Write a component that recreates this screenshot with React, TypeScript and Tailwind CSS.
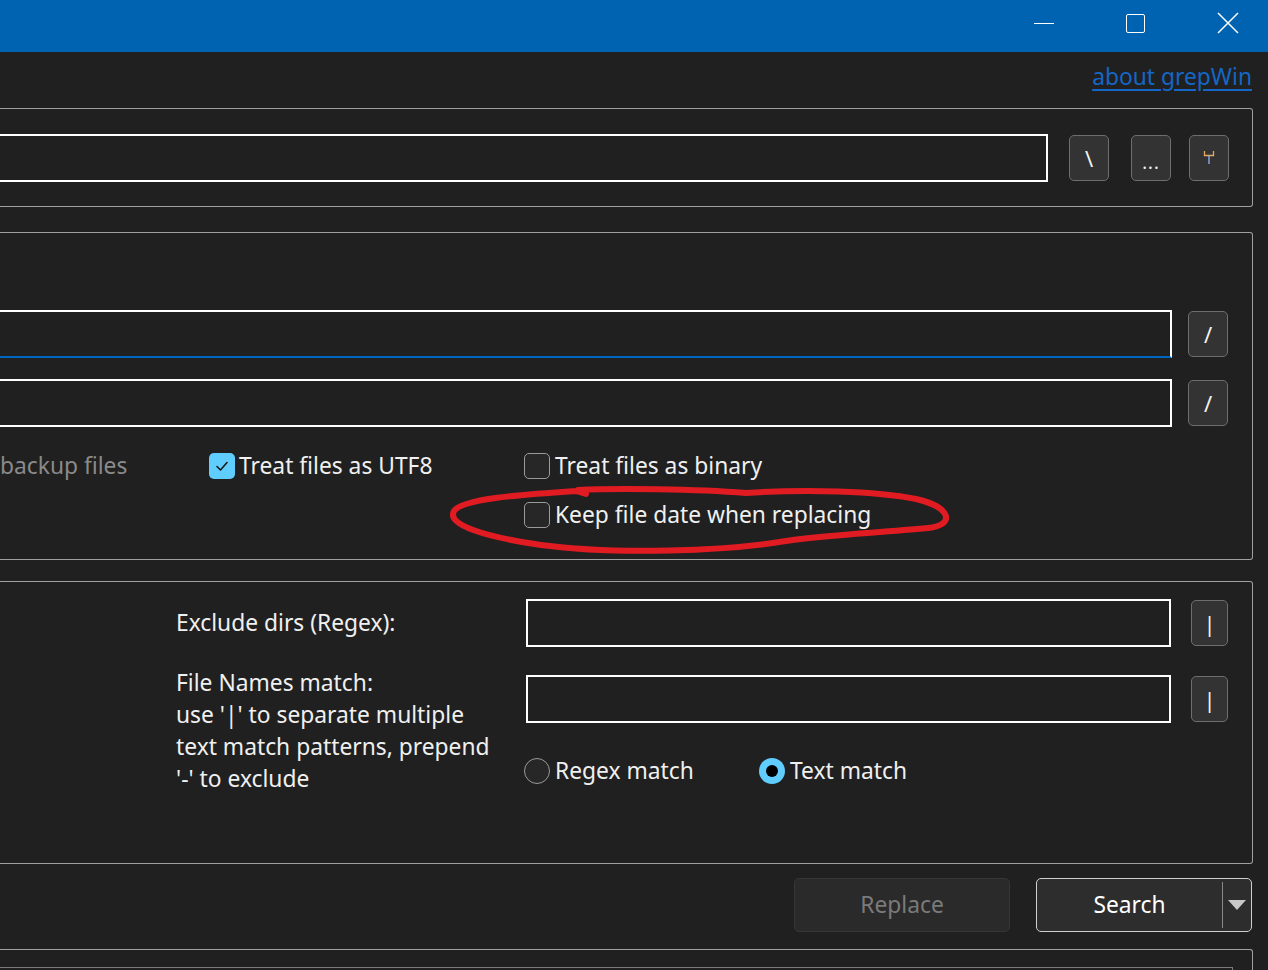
import React from "react";

const ToolButton = ({ children, className = "" }: { children: React.ReactNode; className?: string }) => (
  <div
    className={`flex items-center justify-center h-[46px] rounded-[5px] border border-[#6e6e6e] bg-[#333333] text-[#f2f2f2] text-[22px] leading-none shrink-0 ${className}`}
  >
    {children}
  </div>
);

const CheckBox = ({ checked = false }: { checked?: boolean }) =>
  checked ? (
    <div className="w-[26px] h-[26px] rounded-[5px] bg-[#60cdff] flex items-center justify-center shrink-0">
      <svg width="14" height="12" viewBox="0 0 14 12" fill="none">
        <path d="M2 6.5 L5.5 10 L12 2.5" stroke="#1a1a1a" strokeWidth="1.6" strokeLinecap="round" strokeLinejoin="round" />
      </svg>
    </div>
  ) : (
    <div className="w-[26px] h-[26px] rounded-[5px] border-[1.5px] border-[#9a9a9a] bg-[#272727] shrink-0" />
  );

const Radio = ({ checked = false }: { checked?: boolean }) =>
  checked ? (
    <div className="w-[26px] h-[26px] rounded-full bg-[#60cdff] flex items-center justify-center shrink-0">
      <div className="w-[12px] h-[12px] rounded-full bg-black" />
    </div>
  ) : (
    <div className="w-[26px] h-[26px] rounded-full border-[1.5px] border-[#9a9a9a] bg-[#272727] shrink-0" />
  );

export default function App() {
  return (
    <div className="relative w-[1268px] h-[970px] overflow-hidden bg-[#202020] text-[#f0f0f0] font-['Noto_Sans',sans-serif] text-[22.8px]">
      {/* Title bar */}
      <div className="h-[52px] bg-[#0063b1] flex items-center justify-end pb-[6px]">
        <div className="w-[76px] flex items-center justify-center">
          <div className="w-[20px] h-px bg-white" />
        </div>
        <div className="w-[106px] flex items-center justify-center">
          <div className="w-[19px] h-[19px] border-[1.5px] border-white rounded-[2px]" />
        </div>
        <div className="w-[80px] flex items-center justify-center">
          <svg width="22" height="22" viewBox="0 0 22 22">
            <path d="M1 1 L21 21 M21 1 L1 21" stroke="white" strokeWidth="1.5" />
          </svg>
        </div>
      </div>

      {/* About link */}
      <div className="h-[56px] flex items-center justify-end pr-[16px] pb-[6px]">
        <span className="text-[#1467c7] underline underline-offset-[4px]">about grepWin</span>
      </div>

      {/* Search path group */}
      <div className="h-[99px] mr-[15px] border-y border-r border-[#a0a0a0] rounded-tr-[3px] rounded-br-[3px] flex items-center pr-[23px]">
        <div className="flex-1 h-[48px] border-2 border-l-0 border-white" />
        <ToolButton className="w-[40px] ml-[21px]">\</ToolButton>
        <ToolButton className="w-[40px] ml-[22px]">
          <span className="text-[18px] tracking-[1px] mt-[8px]">...</span>
        </ToolButton>
        <ToolButton className="w-[40px] ml-[18px]">
          <svg width="12" height="14" viewBox="0 0 12 14" fill="none">
            <path d="M1.5 0 V4.5 H10.5 V0" stroke="#e8a860" strokeWidth="1.3" />
            <path d="M6 4.5 V13" stroke="#8cb8f0" strokeWidth="1.3" />
          </svg>
        </ToolButton>
      </div>

      {/* Search text group */}
      <div className="relative h-[328px] mt-[25px] mr-[15px] border-y border-r border-[#a0a0a0] rounded-tr-[3px] rounded-br-[3px] pt-[77px] pr-[24px]">
        <div className="flex items-center">
          <div className="flex-1 h-[48px] border-2 border-l-0 border-white border-b-[#0067c0]" />
          <ToolButton className="w-[40px] ml-[16px]">/</ToolButton>
        </div>
        <div className="flex items-center mt-[21px]">
          <div className="flex-1 h-[48px] border-2 border-l-0 border-white" />
          <ToolButton className="w-[40px] ml-[16px]">/</ToolButton>
        </div>
        <div className="flex items-center h-[32px] mt-[23px]">
          <div className="w-[209px] text-[#8a8a8a]">backup files</div>
          <div className="w-[315px] flex items-center gap-[4px]">
            <CheckBox checked />
            <span>Treat files as UTF8</span>
          </div>
          <div className="flex items-center gap-[5px]">
            <CheckBox />
            <span>Treat files as binary</span>
          </div>
        </div>
        <div className="flex items-center h-[32px] mt-[17px] pl-[524px] gap-[5px]">
          <CheckBox />
          <span>Keep file date when replacing</span>
        </div>

        {/* Red hand-drawn mark */}
        <svg
          className="absolute left-[446px] top-[252px] pointer-events-none"
          width="510"
          height="76"
          viewBox="0 0 510 76"
          fill="none"
        >
          <path
            d="M132 5 C 170 3, 250 4, 300 8 C 360 4, 430 6, 470 14 C 505 22, 510 40, 482 43 C 430 48, 380 50, 340 56 C 280 66, 170 70, 95 60 C 40 52, 0 40, 8 26 C 16 14, 70 10, 130 6 L 140 9"
            stroke="#e11b22"
            strokeWidth="6"
            strokeLinecap="round"
            strokeLinejoin="round"
          />
        </svg>
      </div>

      {/* Filters group */}
      <div className="h-[283px] mt-[21px] mr-[15px] border-y border-r border-[#a0a0a0] rounded-tr-[3px] rounded-br-[3px] pt-[17px] pr-[24px]">
        <div className="flex items-center">
          <div className="w-[526px] pl-[176px] shrink-0">Exclude dirs (Regex):</div>
          <div className="flex-1 h-[48px] border-2 border-white" />
          <ToolButton className="w-[37px] ml-[20px]">|</ToolButton>
        </div>
        <div className="flex items-start mt-[28px]">
          <div className="w-[526px] pl-[176px] shrink-0 leading-[32px] -mt-[8px]">
            File Names match:
            <br />
            use '|' to separate multiple
            <br />
            text match patterns, prepend
            <br />
            '-' to exclude
          </div>
          <div className="flex-1">
            <div className="flex items-center">
              <div className="flex-1 h-[48px] border-2 border-white" />
              <ToolButton className="w-[37px] ml-[20px]">|</ToolButton>
            </div>
            <div className="flex items-center h-[32px] mt-[32px] -ml-[2px]">
              <div className="w-[235px] flex items-center gap-[5px]">
                <Radio />
                <span>Regex match</span>
              </div>
              <div className="flex items-center gap-[5px]">
                <Radio checked />
                <span>Text match</span>
              </div>
            </div>
          </div>
        </div>
      </div>

      {/* Action buttons */}
      <div className="flex justify-end mt-[14px] pr-[16px] gap-[26px]">
        <div className="w-[216px] h-[54px] rounded-[5px] border border-[#363636] bg-[#2a2a2a] flex items-center justify-center text-[#7a7a7a]">
          Replace
        </div>
        <div className="w-[216px] h-[54px] rounded-[5px] border border-[#cfcfcf] bg-[#2d2d2d] flex items-stretch text-white">
          <div className="flex-1 flex items-center justify-center">Search</div>
          <div className="w-px my-[3px] bg-[#8a8a8a]" />
          <div className="w-[28px] flex items-center justify-center">
            <svg width="18" height="10" viewBox="0 0 18 10">
              <path d="M0 0 H18 L9 10 Z" fill="#c8c8c8" />
            </svg>
          </div>
        </div>
      </div>

      {/* Results group */}
      <div className="h-[60px] mt-[17px] mr-[15px] border-t border-r border-[#a0a0a0] rounded-tr-[3px] pt-[17px] pr-[19px]">
        <div className="h-full border-t border-r border-[#7a7a7a]" />
      </div>
    </div>
  );
}
